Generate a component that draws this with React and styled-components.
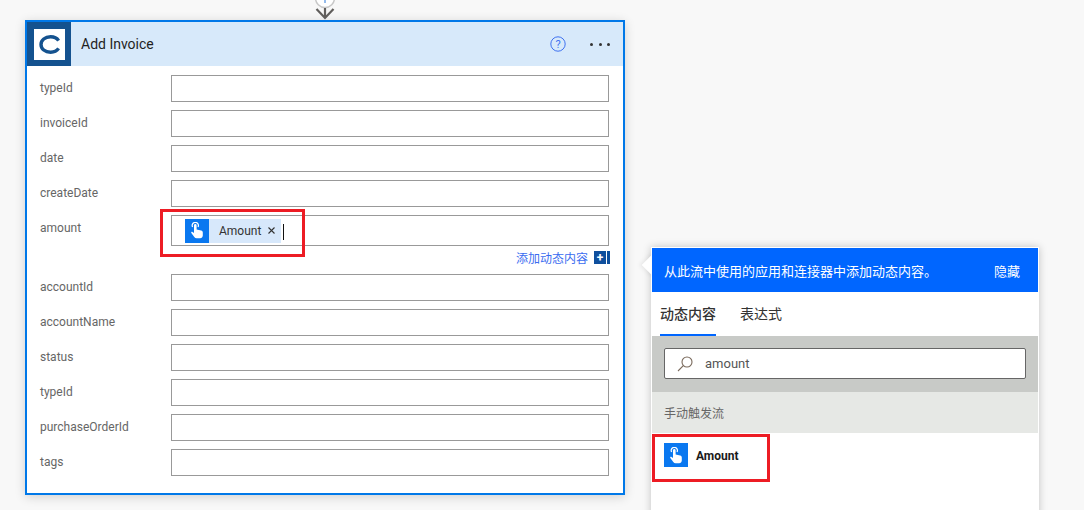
import React from "react";
import styled, { createGlobalStyle } from "styled-components";

const cjk = `Roboto, "Noto Sans CJK SC", sans-serif`;

const GlobalStyle = createGlobalStyle`
  html, body {
    margin: 0;
    background: #f8f8f8;
    overflow: hidden;
  }
  * { box-sizing: border-box; }
`;

const Canvas = styled.div`
  position: relative;
  display: flex;
  align-items: flex-start;
  gap: 26px;
  width: 1084px;
  height: 510px;
  padding: 20px 0 0 25px;
  overflow: hidden;
  font-family: ${cjk};
`;

const Connector = styled.svg`
  position: absolute;
  left: 312px;
  top: 0;
`;

const Card = styled.div`
  width: 600px;
  height: 475px;
  flex: none;
  background: #fff;
  border: 2px solid #0078e8;
  box-shadow: 0 2px 10px rgba(0, 0, 0, 0.16);
`;

const CardHeader = styled.div`
  display: flex;
  align-items: center;
  height: 44px;
  background: #d7e9fa;
`;

const Logo = styled.div`
  display: flex;
  align-items: center;
  justify-content: center;
  width: 44px;
  height: 44px;
  background: #14528f;
`;

const LogoTile = styled.div`
  display: flex;
  align-items: center;
  justify-content: center;
  width: 31px;
  height: 31px;
  background: #fff;
`;

const CardTitle = styled.div`
  flex: 1;
  margin-left: 10px;
  font-size: 14px;
  color: #1f1f1f;
`;

const Dots = styled.div`
  display: flex;
  gap: 5.5px;
  margin: 0 13px 0 24px;
`;

const Dot = styled.span`
  width: 3px;
  height: 3px;
  border-radius: 50%;
  background: #333;
`;

const Fields = styled.div`
  padding: 9px 14px 0 13px;
`;

const Row = styled.div`
  display: flex;
  align-items: flex-start;
  margin-bottom: 8px;
`;

const Label = styled.div`
  width: 131px;
  flex: none;
  padding-top: 5px;
  font-size: 12px;
  line-height: 16px;
  color: #666;
`;

const FieldBox = styled.div`
  position: relative;
  display: flex;
  align-items: center;
  width: 438px;
  height: ${(p) => (p.$tall ? 31 : 27)}px;
  padding-left: 13px;
  background: #fff;
  border: 1px solid #999;
`;

const Highlight = styled.div`
  position: absolute;
  left: ${(p) => p.$left}px;
  top: ${(p) => p.$top}px;
  width: ${(p) => p.$width}px;
  height: ${(p) => p.$height}px;
  border: 3px solid #ed1c24;
  pointer-events: none;
`;

const Token = styled.div`
  display: flex;
  align-items: center;
  height: 24px;
  width: 96px;
  background: #d7e8fb;
  font-size: 12px;
  color: #333;
`;

const TokenName = styled.span`
  margin-left: 10px;
`;

const TokenClose = styled.span`
  display: flex;
  margin-left: 6px;
`;

const IconTile = styled.div`
  display: flex;
  align-items: center;
  justify-content: center;
  width: 24px;
  height: 24px;
  flex: none;
  background: #0a78f0;
`;

const TextCaret = styled.span`
  width: 1px;
  height: 16px;
  margin: 2px 0 0 2px;
  background: #111;
`;

const DynamicRow = styled.div`
  display: flex;
  align-items: center;
  justify-content: flex-end;
  height: 13px;
  margin: -3px 0 10px;
`;

const DynamicLink = styled.span`
  margin-right: 6px;
  font-size: 12px;
  color: #3a6cf0;
`;

const PlusBox = styled.span`
  display: flex;
  align-items: center;
  justify-content: center;
  width: 12px;
  height: 13px;
  background: #0f4f9d;
  color: #fff;
  font-size: 12px;
  font-weight: 700;
  line-height: 1;
`;

const PlusEdge = styled.span`
  width: 3px;
  height: 13px;
  margin-left: 1px;
  margin-right: -1px;
  background: #0f4f9d;
`;

const Panel = styled.div`
  position: relative;
  width: 388px;
  height: 280px;
  flex: none;
  margin-top: 227px;
  background: #fff;
  border: 1px solid #fff;
  box-shadow: 0 0 8px rgba(0, 0, 0, 0.22);
`;

const PanelPointer = styled.div`
  position: absolute;
  left: -7px;
  top: 9px;
  width: 16px;
  height: 16px;
  background: #fff;
  transform: rotate(45deg);
  box-shadow: -2px 2px 4px rgba(0, 0, 0, 0.06);
`;

const PanelHeader = styled.div`
  position: relative;
  display: flex;
  align-items: center;
  justify-content: space-between;
  height: 44px;
  padding: 0 18px 0 12px;
  background: #0066ff;
  color: #fff;
  font-size: 13px;
`;

const Tabs = styled.div`
  display: flex;
  gap: 24px;
  height: 44px;
  padding-left: 8px;
`;

const Tab = styled.div`
  display: flex;
  align-items: center;
  height: 44px;
  font-size: 14px;
  font-weight: ${(p) => (p.$active ? 500 : 400)};
  color: #333;
  border-bottom: 2px solid ${(p) => (p.$active ? "#0066ff" : "transparent")};
`;

const SearchBand = styled.div`
  height: 56px;
  padding: 12px 12px 0;
  background: #c8cac7;
`;

const SearchBox = styled.div`
  display: flex;
  align-items: center;
  gap: 11px;
  height: 31px;
  padding-left: 11px;
  background: #fff;
  border: 1px solid #666;
  border-radius: 2px;
  font-size: 13px;
  color: #555;
`;

const GroupHeader = styled.div`
  display: flex;
  align-items: center;
  height: 41px;
  padding-left: 12px;
  background: #e6e8e5;
  font-size: 12px;
  color: #666;
`;

const ResultItem = styled.div`
  display: flex;
  align-items: center;
  gap: 8px;
  height: 48px;
  padding: 0 0 4px 12px;
  font-size: 12px;
  font-weight: 700;
  color: #1a1a1a;
`;

const ResultName = styled.span`
  padding-top: 1px;
`;

const HandIcon = () => (
  <svg width="14" height="17" viewBox="0 0 14 17" fill="none">
    <path d="M2.6 5 A3.1 3.1 0 1 1 8 5" stroke="#fff" strokeWidth="1.2" />
    <path
      d="M4 3.4 a1.3 1.3 0 0 1 2.6 0 V7.6 l4.6 .9 c1 .2 1.6 1 1.6 2 v3 c0 1.5-1.2 2.7-2.7 2.7 H6.6 c-1 0-1.7-.4-2.3-1.2 L1.3 11 c-.5-.7 .4-1.7 1.2-1.1 l1.5 1.2 Z"
      fill="#fff"
    />
  </svg>
);

const fields = ["typeId", "invoiceId", "date", "createDate"];
const laterFields = ["accountId", "accountName", "status", "typeId", "purchaseOrderId", "tags"];

const FieldRow = ({ name, children, tall }) => (
  <Row>
    <Label>{name}</Label>
    <FieldBox $tall={tall}>{children}</FieldBox>
  </Row>
);

export default function App() {
  return (
    <Canvas>
      <GlobalStyle />
      <Connector width="26" height="20" viewBox="0 0 26 20" fill="none">
        <circle cx="13" cy="-2" r="9.5" fill="#fff" stroke="#c8c8c8" strokeWidth="1.5" />
        <path d="M13 -3 V3" stroke="#2a78d8" strokeWidth="1" />
        <path d="M13 8 V18 M4.5 9 L13 18 L21.5 9" stroke="#605e5c" strokeWidth="2.2" />
      </Connector>

      <Card>
        <CardHeader>
          <Logo>
            <LogoTile>
              <svg width="21" height="19" viewBox="0 0 21 19" fill="none">
                <path
                  d="M19.6 5.6 C18 3.2 15 1.8 11.6 1.8 C6 1.8 2 5 2 9.5 C2 14 6 17.2 11.6 17.2 C15 17.2 18 15.8 19.6 13.4"
                  stroke="#14528f"
                  strokeWidth="3.4"
                />
              </svg>
            </LogoTile>
          </Logo>
          <CardTitle>Add Invoice</CardTitle>
          <svg width="16" height="16" viewBox="0 0 16 16" fill="none">
            <circle cx="8" cy="8" r="7.2" stroke="#3f72f0" strokeWidth="1" />
            <text x="8" y="11.8" textAnchor="middle" fontSize="11" fontFamily="Roboto" fill="#3f72f0">
              ?
            </text>
          </svg>
          <Dots>
            <Dot />
            <Dot />
            <Dot />
          </Dots>
        </CardHeader>

        <Fields>
          {fields.map((name) => (
            <FieldRow key={name} name={name} />
          ))}
          <FieldRow name="amount" tall>
            <Token>
              <IconTile>
                <HandIcon />
              </IconTile>
              <TokenName>Amount</TokenName>
              <TokenClose>
                <svg width="9" height="9" viewBox="0 0 9 9" stroke="#333" strokeWidth="1.1">
                  <path d="M1.5 1.5 L7.5 7.5 M7.5 1.5 L1.5 7.5" />
                </svg>
              </TokenClose>
            </Token>
            <TextCaret />
            <Highlight $left={-12} $top={-7} $width={145} $height={48} />
          </FieldRow>
          <DynamicRow>
            <DynamicLink>添加动态内容</DynamicLink>
            <PlusBox>+</PlusBox>
            <PlusEdge />
          </DynamicRow>
          {laterFields.map((name, i) => (
            <FieldRow key={name + i} name={name} />
          ))}
        </Fields>
      </Card>

      <Panel>
        <PanelPointer />
        <PanelHeader>
          <span>从此流中使用的应用和连接器中添加动态内容。</span>
          <span>隐藏</span>
        </PanelHeader>
        <Tabs>
          <Tab $active>动态内容</Tab>
          <Tab>表达式</Tab>
        </Tabs>
        <SearchBand>
          <SearchBox>
            <svg width="18" height="18" viewBox="0 0 18 18" fill="none" stroke="#7a6a5c" strokeWidth="1.1">
              <circle cx="11" cy="7" r="5" />
              <path d="M7.3 10.7 L2 16" />
            </svg>
            amount
          </SearchBox>
        </SearchBand>
        <GroupHeader>手动触发流</GroupHeader>
        <ResultItem>
          <IconTile>
            <HandIcon />
          </IconTile>
          <ResultName>Amount</ResultName>
        </ResultItem>
        <Highlight $left={0} $top={186} $width={118} $height={48} />
      </Panel>
    </Canvas>
  );
}
